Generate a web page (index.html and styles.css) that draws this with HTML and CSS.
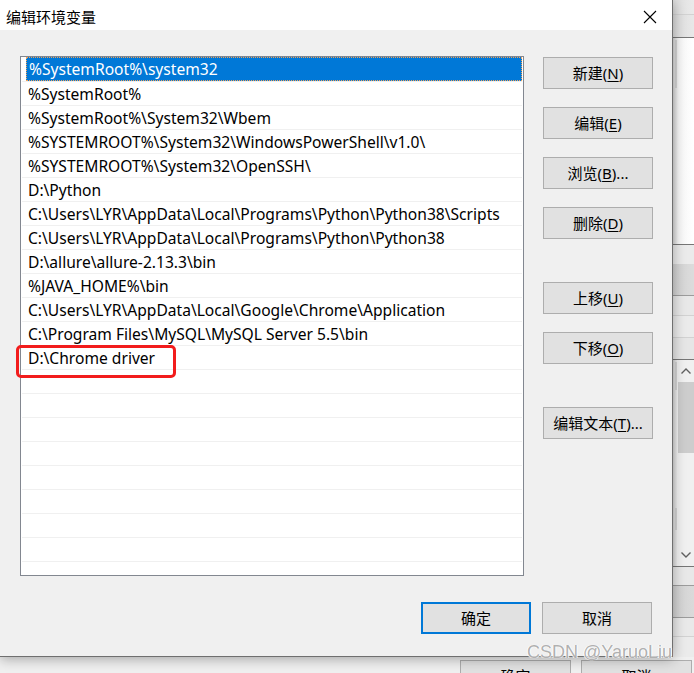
FILE: index.html
```html
<!DOCTYPE html>
<html lang="zh-CN">
<head>
<meta charset="utf-8">
<title>编辑环境变量</title>
<link rel="stylesheet" href="styles.css">
</head>
<body>
<div class="desktop">
  <div class="bgwin">
    <div class="bg-main">
      <div class="bg-fill"></div>
      <div class="bg-col">
        <div class="s s-a"></div>
        <div class="s s-line-l"></div>
        <div class="s s-c"></div>
        <div class="s s-line-d"></div>
        <div class="s s-pane">
          <div class="pane-edge"><span class="mark mark1"></span></div>
          <div class="pane-white"></div>
        </div>
        <div class="s s-line-d"></div>
        <div class="s s-g"></div>
        <div class="s s-h"></div>
        <div class="s s-line-m"></div>
        <div class="s s-j"></div>
        <div class="s s-line-l"></div>
        <div class="s s-l"></div>
        <div class="s s-line-l"></div>
        <div class="s s-n"></div>
        <div class="s s-line-d"></div>
        <div class="s s-pane2">
          <div class="pane-edge"><span class="mark mark2"></span><span class="mark mark3"></span></div>
          <div class="vscroll">
            <div class="sb-btn">
              <svg width="12" height="8" viewBox="0 0 12 8"><polyline points="1.5,6.5 6,2 10.5,6.5" fill="none" stroke="#606060" stroke-width="1.4"/></svg>
            </div>
            <div class="sb-thumb"></div>
            <div class="sb-track"></div>
            <div class="sb-btn">
              <svg width="12" height="8" viewBox="0 0 12 8"><polyline points="1.5,1.5 6,6 10.5,1.5" fill="none" stroke="#606060" stroke-width="1.4"/></svg>
            </div>
          </div>
        </div>
        <div class="s s-line-d"></div>
        <div class="s s-r"></div>
        <div class="s s-line-m"></div>
        <div class="s s-t"></div>
        <div class="s s-line-m"></div>
        <div class="s s-v"></div>
        <div class="s s-line-l"></div>
        <div class="s s-x"></div>
      </div>
    </div>
    <div class="bg-bottom">
      <div class="bg-btn">确定</div>
      <div class="bg-btn">取消</div>
    </div>
  </div>

  <div class="dialog">
    <div class="titlebar">
      <span class="title">编辑环境变量</span>
      <svg class="close" width="14" height="14" viewBox="0 0 14 14"><path d="M1 1 L13 13 M13 1 L1 13" stroke="#000" stroke-width="1.1" fill="none"/></svg>
    </div>
    <div class="body">
      <div class="top">
        <div class="list">
          <div class="rows">
            <div class="row selected">%SystemRoot%\system32</div>
            <div class="row">%SystemRoot%</div>
            <div class="row">%SystemRoot%\System32\Wbem</div>
            <div class="row">%SYSTEMROOT%\System32\WindowsPowerShell\v1.0\</div>
            <div class="row">%SYSTEMROOT%\System32\OpenSSH\</div>
            <div class="row">D:\Python</div>
            <div class="row">C:\Users\LYR\AppData\Local\Programs\Python\Python38\Scripts</div>
            <div class="row">C:\Users\LYR\AppData\Local\Programs\Python\Python38</div>
            <div class="row">D:\allure\allure-2.13.3\bin</div>
            <div class="row">%JAVA_HOME%\bin</div>
            <div class="row">C:\Users\LYR\AppData\Local\Google\Chrome\Application</div>
            <div class="row">C:\Program Files\MySQL\MySQL Server 5.5\bin</div>
            <div class="row">D:\Chrome driver</div>
            <div class="row"></div>
            <div class="row"></div>
            <div class="row"></div>
            <div class="row"></div>
            <div class="row"></div>
            <div class="row"></div>
            <div class="row"></div>
            <div class="row"></div>
            <div class="row"></div>
          </div>
          <div class="redbox"></div>
        </div>
        <div class="side">
          <div class="group">
            <div class="btn">新建(<u>N</u>)</div>
            <div class="btn">编辑(<u>E</u>)</div>
            <div class="btn">浏览(<u>B</u>)...</div>
            <div class="btn">删除(<u>D</u>)</div>
          </div>
          <div class="group">
            <div class="btn">上移(<u>U</u>)</div>
            <div class="btn">下移(<u>O</u>)</div>
          </div>
          <div class="group">
            <div class="btn">编辑文本(<u>T</u>)...</div>
          </div>
        </div>
      </div>
      <div class="footer">
        <div class="btn default">确定</div>
        <div class="btn">取消</div>
      </div>
    </div>
  </div>

  <div class="watermark">CSDN @YaruoLiu</div>
</div>
</body>
</html>
```

FILE: styles.css
```css
html, body {
  margin: 0;
  padding: 0;
}
body {
  width: 694px;
  height: 673px;
  overflow: hidden;
  background: #f0f0f0;
  font-family: "Noto Sans", "Noto Sans CJK SC", sans-serif;
  color: #000;
}
.desktop {
  position: relative;
  width: 694px;
  height: 673px;
}

/* background window */
.bgwin {
  display: flex;
  flex-direction: column;
  width: 694px;
  height: 673px;
  overflow: hidden;
}
.bg-main {
  display: flex;
  height: 657px;
  flex: none;
}
.bg-fill {
  flex: 1;
  background: #f0f0f0;
}
.bg-col {
  width: 21px;
  display: flex;
  flex-direction: column;
}
.s { flex: none; }
.s-line-l { height: 1px; background: #d2d2d2; }
.s-line-d { height: 1px; background: #767676; }
.s-line-m { height: 1px; background: #9c9c9c; }
.s-a { height: 14px; background: linear-gradient(90deg, #dedede, #eaeaea); }
.s-c { height: 22px; background: linear-gradient(90deg, #dcdcdc, #e8e8e8); }
.s-pane { height: 206px; display: flex; }
.s-pane2 { height: 206px; display: flex; }
.pane-edge {
  width: 5px;
  background: linear-gradient(90deg, #d8d8d8, #f4f4f4);
  display: flex;
  flex-direction: column;
}
.pane-white {
  flex: 1;
  background: linear-gradient(90deg, #f6f6f6, #ffffff);
}
.mark {
  display: block;
  width: 2px;
  margin-left: 2px;
  background: #d4d4d4;
}
.mark1 { height: 48px; margin-top: 2px; }
.mark2 { height: 28px; margin-top: 2px; }
.mark3 { height: 22px; margin-top: 118px; }
.s-g { height: 19px; background: #ebebeb; }
.s-h { height: 31px; background: linear-gradient(90deg, #d2d2d2, #dcdcdc); }
.s-j { height: 19px; background: #e8e8e8; }
.s-l { height: 21px; background: #ebebeb; }
.s-n { height: 21px; background: #e6e6e6; }
.s-r { height: 18px; background: #e8e8e8; }
.s-t { height: 31px; background: linear-gradient(90deg, #d2d2d2, #dadada); }
.s-v { height: 18px; background: #e9e9e9; }
.s-x { flex: 1; background: #ebebeb; }

.vscroll {
  flex: 1;
  background: #f0f0f0;
  display: flex;
  flex-direction: column;
}
.sb-btn {
  height: 22px;
  display: flex;
  align-items: center;
  justify-content: center;
}
.sb-thumb {
  height: 71px;
  background: #cdcdcd;
}
.sb-track { flex: 1; }

.bg-bottom {
  flex: none;
  height: 16px;
  display: flex;
  align-items: flex-start;
  gap: 10px;
  padding: 3px 0 0 460px;
  background: #f0f0f0;
  overflow: hidden;
}
.bg-btn {
  flex: none;
  width: 109px;
  height: 30px;
  border: 1px solid #adadad;
  background: #e1e1e1;
  font-size: 15px;
  text-align: center;
  line-height: 30px;
}

/* dialog */
.dialog {
  position: absolute;
  left: 0;
  top: 0;
  width: 672px;
  height: 656px;
  border-right: 1px solid #6f6f6f;
  border-bottom: 1px solid #6f6f6f;
  background: #f0f0f0;
  box-shadow: 0 2px 12px rgba(0, 0, 0, 0.32);
  display: flex;
  flex-direction: column;
}
.titlebar {
  height: 30px;
  background: #fff;
  display: flex;
  align-items: center;
  justify-content: space-between;
  padding: 0 15px 0 6px;
  flex: none;
}
.title {
  font-family: "Noto Sans CJK SC", sans-serif;
  font-size: 15px;
  line-height: 20px;
  margin-top: 3px;
}
.close {
  margin-top: 3px;
}
.body {
  flex: 1;
  display: flex;
  flex-direction: column;
  padding: 26px 0 0 20px;
}
.top {
  display: flex;
  gap: 19px;
}
.list {
  position: relative;
  width: 502px;
  height: 518px;
  border: 1px solid #828790;
  background: #fff;
}
.rows {
  width: 100%;
  height: 100%;
  overflow: hidden;
  padding: 0 1px;
  box-sizing: border-box;
}
.row {
  height: 24px;
  box-sizing: border-box;
  border-top: 1px solid #f0f0f0;
  padding: 1px 0 0 6px;
  font-size: 15.6px;
  line-height: 22px;
  white-space: nowrap;
  color: #000;
}
.row.selected {
  margin-left: 4px;
  padding-left: 2px;
  background: #0078d7;
  color: #fff;
  border: 1px dotted #f2a35b;
  line-height: 21px;
}
.redbox {
  position: absolute;
  left: -5px;
  top: 288px;
  width: 154px;
  height: 27px;
  border: 3px solid #f21c1c;
  border-radius: 5px;
}
.side {
  display: flex;
  flex-direction: column;
  gap: 43px;
  padding-top: 1px;
}
.group {
  display: flex;
  flex-direction: column;
  gap: 18px;
}
.btn {
  width: 108px;
  height: 30px;
  border: 1px solid #adadad;
  background: #e1e1e1;
  font-size: 15px;
  line-height: 30px;
  text-align: center;
  white-space: nowrap;
}
.btn u {
  text-decoration-thickness: 1px;
  text-underline-offset: 2px;
}
.footer {
  display: flex;
  gap: 11px;
  padding: 26px 0 0 401px;
}
.btn.default {
  width: 106px;
  height: 28px;
  line-height: 28px;
  border: 2px solid #0078d7;
}

.watermark {
  position: absolute;
  left: 527px;
  top: 641px;
  font-family: "Liberation Sans", sans-serif;
  font-size: 18px;
  line-height: 22px;
  color: rgba(150, 150, 150, 0.75);
  text-shadow: 0 0 1px #fff, 1px 0 0 rgba(255,255,255,0.8), -1px 0 0 rgba(255,255,255,0.8);
}
```
